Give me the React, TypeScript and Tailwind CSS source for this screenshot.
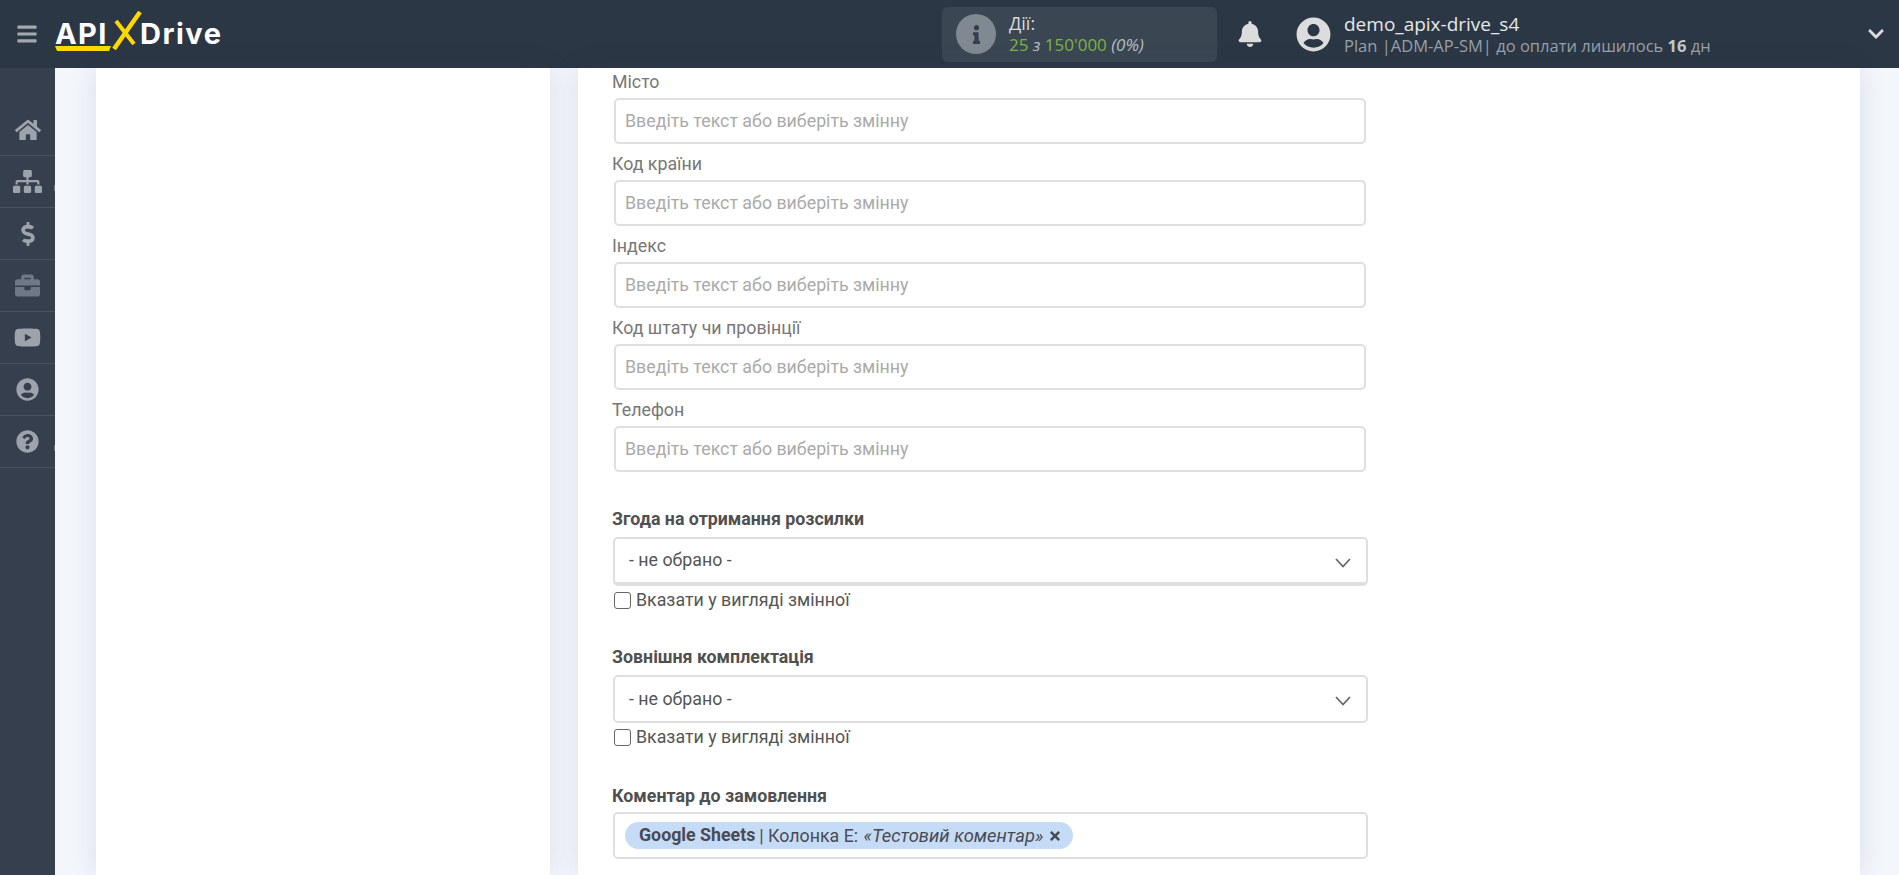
import React from "react";
import {
  FaBars,
  FaBell,
  FaBriefcase,
  FaChevronDown,
  FaDollarSign,
  FaHome,
  FaInfo,
  FaQuestionCircle,
  FaSitemap,
  FaTimes,
  FaUserCircle,
  FaYoutube,
} from "react-icons/fa";

const navItems = [
  { icon: <FaHome size={26} />, cls: "text-[#9ca3ab]" },
  { icon: <FaSitemap size={29} />, cls: "text-[#9ca3ab]", mark: true },
  { icon: <FaDollarSign size={24} />, cls: "text-[#9ca3ab]" },
  { icon: <FaBriefcase size={25} />, cls: "text-[#6f7986]" },
  { icon: <FaYoutube size={27} />, cls: "text-[#9ca3ab]" },
  { icon: <FaUserCircle size={23} />, cls: "text-[#9ca3ab]" },
  { icon: <FaQuestionCircle size={23} />, cls: "text-[#9ca3ab]", mark: true },
];

const textFields = ["Місто", "Код країни", "Індекс", "Код штату чи провінції", "Телефон"];

const Logo: React.FC = () => (
  <div className="relative flex h-[68px] w-[170px] items-center font-['Inter',sans-serif] text-[29px] font-bold leading-none text-white">
    <span className="mb-[2px] w-[57px] tracking-[1.4px]">API</span>
    <svg className="mb-[6px] h-[40px] w-[30px] shrink-0" viewBox="0 0 30 40">
      <path d="M2 38 L28 1" stroke="#ffd800" strokeWidth="4.5" fill="none" />
      <path d="M4 10 L22 33" stroke="#ffd800" strokeWidth="4" fill="none" />
    </svg>
    <span className="mb-[2px] -ml-[2px] tracking-[1.5px]">Drive</span>
    <svg className="absolute left-0 top-[46px] h-[5px] w-[57px]" viewBox="0 0 57 5">
      <polygon points="0,0 56,0 54,5 2,5" fill="#ffd800" />
    </svg>
  </div>
);

const Header: React.FC = () => (
  <header className="flex h-[68px] shrink-0 items-center bg-[#2c3745] font-['Open_Sans',sans-serif]">
    <div className="flex w-[55px] justify-center pr-[1px] text-[#a4a9af]">
      <FaBars size={22} />
    </div>
    <Logo />
    <div className="ml-[717px] flex h-[55px] w-[275px] items-center rounded-md bg-[#3a4753] pl-[14px]">
      <div className="flex h-[40px] w-[40px] items-center justify-center rounded-full bg-[#808991] text-[#333f4c]">
        <FaInfo size={19} />
      </div>
      <div className="ml-[13px] leading-[21px]">
        <div className="text-[18px] text-[#d6d9dc]">Дії:</div>
        <div className="text-[17px] text-[#7cb342]">
          25 <span className="italic text-[#b7bdc3]">з</span> 150'000{" "}
          <span className="italic text-[#b7bdc3]">(0%)</span>
        </div>
      </div>
    </div>
    <div className="ml-[20px] text-[#dcdcdc]">
      <FaBell size={26} />
    </div>
    <div className="ml-[33px] text-[#dcdcdc]">
      <FaUserCircle size={35} />
    </div>
    <div className="ml-[13px] flex flex-col">
      <div className="text-[19px] leading-[22px] text-[#e6e7e9]">demo_apix-drive_s4</div>
      <div className="text-[16.5px] leading-[21px] text-[#98a0a8]">
        Plan |ADM-AP-SM| до оплати лишилось <b className="font-bold text-[#c3c7cb]">16</b> дн
      </div>
    </div>
    <div className="ml-auto mr-[14px] text-[#dcdcdc]">
      <FaChevronDown size={18} />
    </div>
  </header>
);

const Sidebar: React.FC = () => (
  <aside className="w-[55px] shrink-0 bg-[#353f4e] pt-[36px]">
    {navItems.map((item, i) => (
      <div
        key={i}
        className={`relative flex h-[52px] items-center justify-center border-b border-[#4a5361] ${item.cls}`}
      >
        {item.icon}
        {item.mark && (
          <span className="absolute right-0 top-[29px] h-[6px] w-[1px] bg-[#6f7986]" />
        )}
      </div>
    ))}
  </aside>
);

const TextField: React.FC<{ label: string }> = ({ label }) => (
  <div className="mb-[6px]">
    <div className="mb-[2px] -ml-[1px] flex h-[28px] items-center text-[17.8px] text-[#777]">
      {label}
    </div>
    <div className="ml-[1px] flex h-[46px] w-[752px] items-center rounded-[5px] border-2 border-[#dfdfdf] px-[9px] text-[17.8px] text-[#aaa]">
      Введіть текст або виберіть змінну
    </div>
  </div>
);

const SelectField: React.FC<{ label: string; thick?: boolean }> = ({ label, thick }) => (
  <div>
    <div className="-ml-[1px] flex h-[24px] items-center text-[17.8px] font-bold text-[#505050]">
      {label}
    </div>
    <div
      className={`mt-[6px] flex w-[755px] items-center justify-between rounded-[5px] border-2 border-[#dfdfdf] pl-[14px] pr-[15px] text-[17.8px] text-[#555] ${
        thick ? "h-[49px] border-b-[4px]" : "h-[48px]"
      }`}
    >
      - не обрано -
      <svg width="16" height="10" viewBox="0 0 16 10" className="mt-[4px]">
        <path d="M1 1 L8 8.5 L15 1" stroke="#666" strokeWidth="1.8" fill="none" />
      </svg>
    </div>
    <label className="mt-[2px] flex h-[24px] items-center text-[17.8px] text-[#555]">
      <span className="ml-[1px] h-[17px] w-[17px] rounded-[3px] border border-[#666] bg-white" />
      <span className="ml-[5px]">Вказати у вигляді змінної</span>
    </label>
  </div>
);

const FormCard: React.FC = () => (
  <section className="w-[1282px] shrink-0 bg-white pl-[35px] font-['Roboto',sans-serif] shadow-[0_0_25px_rgba(40,60,90,0.12)]">
    {textFields.map((label) => (
      <TextField key={label} label={label} />
    ))}
    <div className="mt-[35px] flex flex-col gap-[33px]">
      <SelectField label="Згода на отримання розсилки" thick />
      <SelectField label="Зовнішня комплектація" />
    </div>
    <div className="mt-[35px]">
      <div className="-ml-[1px] flex h-[24px] items-center text-[17.8px] font-bold text-[#505050]">
        Коментар до замовлення
      </div>
      <div className="mt-[4px] flex h-[47px] w-[755px] items-center rounded-[5px] border-2 border-[#dfdfdf] pl-[10px]">
        <div className="flex h-[27px] items-center rounded-full bg-[#c6dcf6] pl-[14px] pr-[11px] text-[17.8px] text-[#4a4a55]">
          <b className="font-bold">Google Sheets</b>
          <span className="ml-[4px]">
            | Колонка E: <i className="ml-[1px] text-[18.4px] italic">«Тестовий коментар»</i>
          </span>
          <FaTimes size={14} className="ml-[5px]" />
        </div>
      </div>
    </div>
  </section>
);

const App: React.FC = () => {
  return (
    <div className="flex h-screen w-full flex-col overflow-hidden bg-[#f3f6fb]">
      <Header />
      <div className="flex min-h-0 flex-1">
        <Sidebar />
        <main className="flex min-w-0 flex-1 gap-[28px] pl-[41px]">
          <section className="w-[454px] shrink-0 bg-white shadow-[0_0_25px_rgba(40,60,90,0.12)]" />
          <FormCard />
        </main>
      </div>
    </div>
  );
};

export default App;
